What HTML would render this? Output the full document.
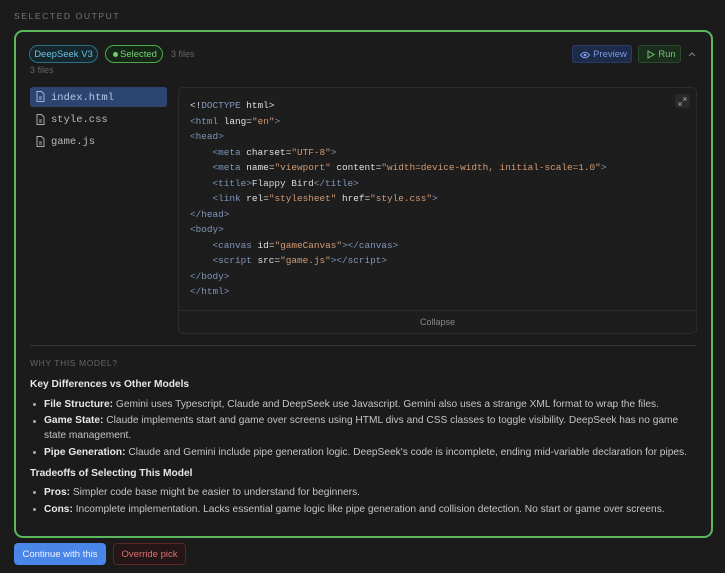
<!DOCTYPE html>
<html><head><meta charset="utf-8"><style>
*{box-sizing:border-box;margin:0;padding:0}
body{width:725px;height:573px;background:#1b1b1b;font-family:"Liberation Sans",sans-serif;color:#cfcfcf;position:relative;overflow:hidden}
.abs{position:absolute}
.lab{font-size:8.5px;letter-spacing:1.6px;color:#777}
.box{left:14px;top:30px;width:699px;height:508px;border:2px solid #5cb85c;border-radius:9px}
.badge{top:45px;height:18px;border-radius:9px;font-size:9.5px;display:flex;align-items:center;justify-content:center}
.btn{display:flex;align-items:center;justify-content:center}
.mono{font-family:"Liberation Mono",monospace}
.code{font-size:9.4px;line-height:15.5px;white-space:pre;color:#d8d8d8}
.t{color:#7f96b8}.s{color:#d29a74}.a{color:#e0e0e0}
.txt{font-size:10.2px;color:#c4c4c4}
b{color:#e8e8e8}
ul{list-style:none}
li{position:relative;padding-left:14px}
li:before{content:"";position:absolute;left:3px;top:6px;width:3px;height:3px;border-radius:50%;background:#aaa}
</style></head><body>
<div class="abs lab" style="left:14px;top:11px">SELECTED OUTPUT</div>
<div class="abs box"></div>
<div class="abs badge" style="left:29px;width:69px;border:1px solid #2d6f86;color:#6bc0db;background:#15262c">DeepSeek V3</div>
<div class="abs badge" style="left:105px;width:58px;border:1px solid #4caa4c;color:#7ad07a;background:#162616;padding-left:9px"><span style="position:absolute;left:7px;top:6px;width:5px;height:5px;border-radius:50%;background:#6cd06c"></span>Selected</div>
<div class="abs" style="left:171px;top:49px;font-size:9px;color:#666">3 files</div>
<div class="abs" style="left:30px;top:65px;font-size:9px;color:#666">3 files</div>
<div class="abs btn" style="left:572px;top:45px;width:60px;height:18px;border-radius:3px;background:#1e2a4a;border:1px solid #2b3b66;color:#7e9ae0;font-size:9.5px;padding-left:16px">Preview
<svg class="abs" style="left:7px;top:4.5px" width="10" height="8" viewBox="0 0 10 8"><path d="M0.5 4Q5 -1.5 9.5 4Q5 9.5 0.5 4Z" fill="none" stroke="#7e9ae0" stroke-width="1"/><circle cx="5" cy="4" r="1.4" fill="#7e9ae0"/></svg></div>
<div class="abs btn" style="left:638px;top:45px;width:43px;height:18px;border-radius:3px;background:#1b2e1b;border:1px solid #2c4a2c;color:#74c274;font-size:9.5px;padding-left:15px">Run
<svg class="abs" style="left:8px;top:4px" width="8" height="9" viewBox="0 0 8 9"><path d="M1 1L7 4.5L1 8Z" fill="none" stroke="#74c274" stroke-width="1"/></svg></div>
<svg class="abs" style="left:688px;top:51px" width="8" height="6" viewBox="0 0 8 6"><path d="M1 5L4 2L7 5" fill="none" stroke="#888" stroke-width="1"/></svg>

<div class="abs" style="left:30px;top:87px;width:137px;height:20px;border-radius:3px;background:#2b4470"></div>
<div class="abs mono" style="left:51px;top:91.5px;font-size:10.5px;color:#b8c8e8">index.html</div>
<div class="abs mono" style="left:51px;top:113.5px;font-size:10.5px;color:#bbb">style.css</div>
<div class="abs mono" style="left:51px;top:136px;font-size:10.5px;color:#bbb">game.js</div>
<svg class="abs" style="left:36px;top:91px" width="9" height="11" viewBox="0 0 9 11"><path d="M1 0.5H5.5L8 3V10.5H1Z" fill="none" stroke="#9fb4dc"/><path d="M3 6H6M3 8H6" stroke="#9fb4dc"/></svg>
<svg class="abs" style="left:36px;top:114px" width="9" height="11" viewBox="0 0 9 11"><path d="M1 0.5H5.5L8 3V10.5H1Z" fill="none" stroke="#aaa"/><path d="M3 6H6M3 8H6" stroke="#aaa"/></svg>
<svg class="abs" style="left:36px;top:136px" width="9" height="11" viewBox="0 0 9 11"><path d="M1 0.5H5.5L8 3V10.5H1Z" fill="none" stroke="#aaa"/><path d="M3 6H6M3 8H6" stroke="#aaa"/></svg>

<div class="abs" style="left:178px;top:87px;width:519px;height:247px;border:1px solid #2c2c2c;border-radius:5px;background:#1d1d1d"></div>
<div class="abs" style="left:675px;top:94px;width:15px;height:14px;border-radius:3px;background:#2a2a2a"></div>
<svg class="abs" style="left:678px;top:97px" width="9" height="9" viewBox="0 0 9 9"><path d="M5 1H8V4M8 1L5 4M4 8H1V5M1 8L4 5" fill="none" stroke="#888" stroke-width="0.9"/></svg>
<div class="abs mono code" style="left:190px;top:98px"><span class="a">&lt;!</span><span class="t">DOCTYPE</span><span class="a"> html&gt;</span>
<span class="t">&lt;html</span> <span class="a">lang</span>=<span class="s">"en"</span><span class="t">&gt;</span>
<span class="t">&lt;head&gt;</span>
    <span class="t">&lt;meta</span> <span class="a">charset</span>=<span class="s">"UTF-8"</span><span class="t">&gt;</span>
    <span class="t">&lt;meta</span> <span class="a">name</span>=<span class="s">"viewport"</span> <span class="a">content</span>=<span class="s">"width=device-width, initial-scale=1.0"</span><span class="t">&gt;</span>
    <span class="t">&lt;title&gt;</span>Flappy Bird<span class="t">&lt;/title&gt;</span>
    <span class="t">&lt;link</span> <span class="a">rel</span>=<span class="s">"stylesheet"</span> <span class="a">href</span>=<span class="s">"style.css"</span><span class="t">&gt;</span>
<span class="t">&lt;/head&gt;</span>
<span class="t">&lt;body&gt;</span>
    <span class="t">&lt;canvas</span> <span class="a">id</span>=<span class="s">"gameCanvas"</span><span class="t">&gt;&lt;/canvas&gt;</span>
    <span class="t">&lt;script</span> <span class="a">src</span>=<span class="s">"game.js"</span><span class="t">&gt;&lt;/script&gt;</span>
<span class="t">&lt;/body&gt;</span>
<span class="t">&lt;/html&gt;</span></div>
<div class="abs" style="left:179px;top:310px;width:517px;height:1px;background:#2c2c2c"></div>
<div class="abs" style="left:179px;top:317px;width:517px;text-align:center;font-size:9px;color:#888">Collapse</div>

<div class="abs" style="left:30px;top:345px;width:667px;height:1px;background:#333"></div>
<div class="abs lab" style="left:30px;top:358px;font-size:8.5px;letter-spacing:0.6px;color:#666">WHY THIS MODEL?</div>
<div class="abs" style="left:30px;top:379px;font-size:10.2px;font-weight:bold;color:#e6e6e6">Key Differences vs Other Models</div>
<ul class="abs txt" style="left:30px;top:397px;width:670px;line-height:15px">
<li style="margin-bottom:2px"><b>File Structure:</b> Gemini uses Typescript, Claude and DeepSeek use Javascript. Gemini also uses a strange XML format to wrap the files.</li>
<li style="margin-bottom:2px;line-height:14.5px"><b>Game State:</b> Claude implements start and game over screens using HTML divs and CSS classes to toggle visibility. DeepSeek has no game state management.</li>
<li><b>Pipe Generation:</b> Claude and Gemini include pipe generation logic. DeepSeek's code is incomplete, ending mid-variable declaration for pipes.</li>
</ul>
<div class="abs" style="left:30px;top:468px;font-size:10.2px;font-weight:bold;color:#e6e6e6">Tradeoffs of Selecting This Model</div>
<ul class="abs txt" style="left:30px;top:485px;width:670px;line-height:15px">
<li style="margin-bottom:2px"><b>Pros:</b> Simpler code base might be easier to understand for beginners.</li>
<li><b>Cons:</b> Incomplete implementation. Lacks essential game logic like pipe generation and collision detection. No start or game over screens.</li>
</ul>

<div class="abs btn" style="left:14px;top:543px;width:92px;height:22px;border-radius:4px;background:#4a86e8;color:#eef3ff;font-size:9.5px">Continue with this</div>
<div class="abs btn" style="left:113px;top:543px;width:73px;height:22px;border-radius:4px;background:#241616;border:1px solid #5a2626;color:#e07070;font-size:9.5px">Override pick</div>
</body></html>
